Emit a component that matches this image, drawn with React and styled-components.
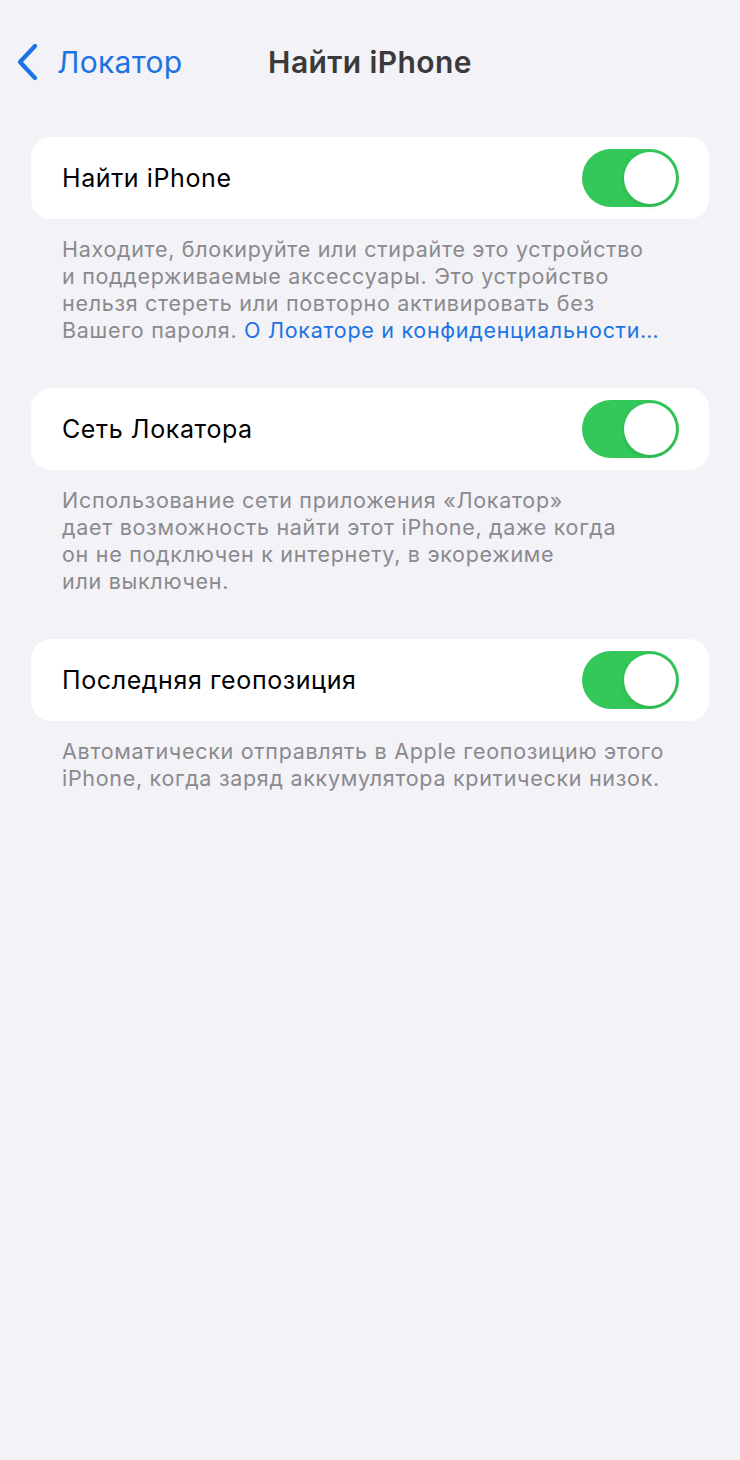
import React from 'react'
import styled, { createGlobalStyle } from 'styled-components'

const GlobalStyle = createGlobalStyle`
  html, body {
    margin: 0;
    padding: 0;
    background: #f2f2f7;
  }
  body {
    font-family: Inter, "Noto Sans", "Liberation Sans", sans-serif;
    -webkit-font-smoothing: antialiased;
  }
`

const Page = styled.div`
  min-height: 1460px;
  background: #f2f2f7;
`

const NavBar = styled.header`
  height: 124px;
  display: grid;
  grid-template-columns: 1fr auto 1fr;
  align-items: center;
`

const BackButton = styled.button`
  justify-self: start;
  display: flex;
  align-items: center;
  gap: 19px;
  padding: 0 0 0 16px;
  border: none;
  background: none;
  color: #1c74e3;
  font-family: inherit;
  font-size: 30px;
  letter-spacing: 0.3px;
  cursor: pointer;
`

const Title = styled.h1`
  margin: 0;
  font-size: 30px;
  font-weight: 600;
  color: #3a3a3c;
  letter-spacing: 0.4px;
`

const Content = styled.main`
  padding: 13px 31px 0;
`

const Section = styled.section`
  margin-bottom: 44px;
`

const Card = styled.div`
  height: 82px;
  background: #ffffff;
  border-radius: 20px;
  display: flex;
  align-items: center;
  justify-content: space-between;
  padding: 0 30px 0 31px;
  box-sizing: border-box;
`

const Label = styled.span`
  font-size: 25px;
  color: #000000;
  letter-spacing: 0.6px;
`

const Track = styled.div`
  width: 97px;
  height: 58px;
  border-radius: 29px;
  background: ${({ $on }) => ($on ? '#34c759' : '#e9e9eb')};
  position: relative;
  flex-shrink: 0;
`

const Knob = styled.div`
  position: absolute;
  top: 3px;
  left: ${({ $on }) => ($on ? '42px' : '3px')};
  width: 52px;
  height: 52px;
  border-radius: 50%;
  background: #ffffff;
  box-shadow: 0 2px 5px rgba(0, 0, 0, 0.12);
`

const Footer = styled.p`
  margin: 17px 0 0;
  padding: 0 31px;
  font-size: 21.5px;
  line-height: 27px;
  color: #8a8a8e;
  letter-spacing: 0.7px;
`

const FooterLink = styled.a`
  color: #1c74e3;
  text-decoration: none;
`

function Toggle({ on }) {
  return (
    <Track $on={on}>
      <Knob $on={on} />
    </Track>
  )
}

function Chevron() {
  return (
    <svg width="22" height="38" viewBox="0 0 22 38" fill="none">
      <path d="M19 3 L4 19 L19 35" stroke="#1c74e3" strokeWidth="4.2" strokeLinecap="round" strokeLinejoin="round" />
    </svg>
  )
}

export default function App() {
  return (
    <Page>
      <GlobalStyle />
      <NavBar>
        <BackButton>
          <Chevron />
          Локатор
        </BackButton>
        <Title>Найти iPhone</Title>
        <div />
      </NavBar>

      <Content>
        <Section>
          <Card>
            <Label>Найти iPhone</Label>
            <Toggle on />
          </Card>
          <Footer>
            Находите, блокируйте или стирайте это устройство<br />
            и поддерживаемые аксессуары. Это устройство<br />
            нельзя стереть или повторно активировать без<br />
            Вашего пароля. <FooterLink href="#">О Локаторе и конфиденциальности…</FooterLink>
          </Footer>
        </Section>

        <Section>
          <Card>
            <Label>Сеть Локатора</Label>
            <Toggle on />
          </Card>
          <Footer>
            Использование сети приложения «Локатор»<br />
            дает возможность найти этот iPhone, даже когда<br />
            он не подключен к интернету, в экорежиме<br />
            или выключен.
          </Footer>
        </Section>

        <Section>
          <Card>
            <Label>Последняя геопозиция</Label>
            <Toggle on />
          </Card>
          <Footer>
            Автоматически отправлять в Apple геопозицию этого<br />
            iPhone, когда заряд аккумулятора критически низок.
          </Footer>
        </Section>
      </Content>
    </Page>
  )
}
